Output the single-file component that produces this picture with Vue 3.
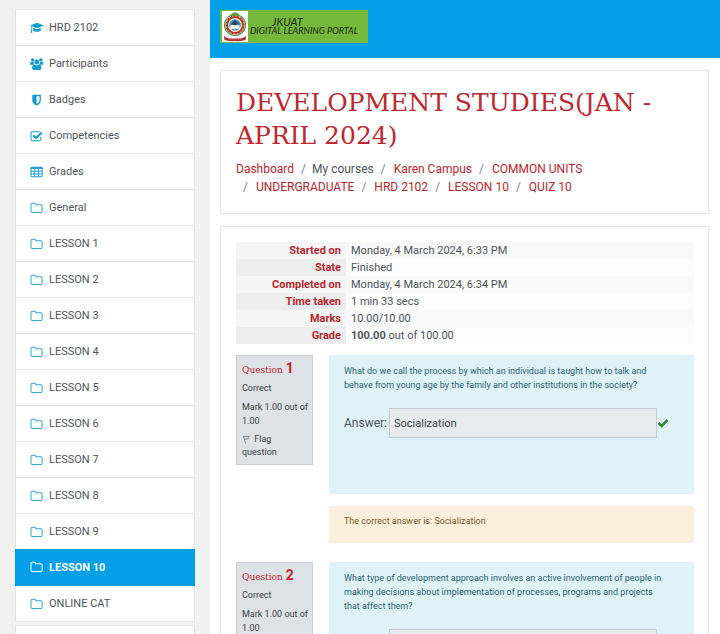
<script setup>
const navItems = [
  { label: 'HRD 2102', icon: 'cap' },
  { label: 'Participants', icon: 'users' },
  { label: 'Badges', icon: 'shield' },
  { label: 'Competencies', icon: 'check' },
  { label: 'Grades', icon: 'table' },
  { label: 'General', icon: 'folder' },
  ...Array.from({ length: 10 }, (_, i) => ({
    label: `LESSON ${i + 1}`,
    icon: 'folder',
    active: i === 9,
  })),
  { label: 'ONLINE CAT', icon: 'folder' },
]

const crumbs = [
  { label: 'Dashboard', link: true },
  { label: 'My courses', link: false },
  { label: 'Karen Campus', link: true },
  { label: 'COMMON UNITS', link: true },
  { label: 'UNDERGRADUATE', link: true },
  { label: 'HRD 2102', link: true },
  { label: 'LESSON 10', link: true },
  { label: 'QUIZ 10', link: true },
]

const summary = [
  { name: 'Started on', value: 'Monday, 4 March 2024, 6:33 PM' },
  { name: 'State', value: 'Finished' },
  { name: 'Completed on', value: 'Monday, 4 March 2024, 6:34 PM' },
  { name: 'Time taken', value: '1 min 33 secs' },
  { name: 'Marks', value: '10.00/10.00' },
  { name: 'Grade', strong: '100.00', value: ' out of 100.00' },
]

const questions = [
  {
    number: 1,
    text: 'What do we call the process by which an individual is taught how to talk and behave from young age by the family and other institutions in the society?',
    answer: 'Socialization',
    feedback: 'The correct answer is: Socialization',
  },
  {
    number: 2,
    text: 'What type of development approach involves an active involvement of people in making decisions about implementation of processes, programs and projects that affect them?',
    answer: '',
    feedback: '',
  },
]
</script>

<template>
  <div class="page">
    <aside class="sidebar">
      <nav class="nav-list">
        <a
          v-for="item in navItems"
          :key="item.label"
          href="#"
          class="nav-item"
          :class="{ active: item.active }"
        >
          <svg v-if="item.icon === 'cap'" class="nav-icon" viewBox="0 0 16 14">
            <path d="M8 1 16 4.2 8 7.4 2 5V9.2L2.600 12.500H.4L1.200 9.200V4.600L0 4.200Z" fill="currentColor" />
            <path d="M3.600 6.700 8 8.500 12.400 6.700V9.800C11 12 5 12 3.600 9.800Z" fill="currentColor" />
          </svg>
          <svg v-else-if="item.icon === 'users'" class="nav-icon" viewBox="0 0 16 14">
            <circle cx="3" cy="2.400" r="2" fill="currentColor" />
            <circle cx="12.500" cy="2.400" r="2" fill="currentColor" />
            <circle cx="7.750" cy="4.600" r="2.900" fill="currentColor" />
            <path d="M0 8V6.300Q0 4.600 1.500 4.600H4Q4.100 6.600 5 8ZM15.500 8V6.300Q15.500 4.600 14 4.600H11.500Q11.400 6.600 10.500 8ZM2.400 12V10.500Q2.400 8 5 7.600Q7.750 9.400 10.500 7.600Q13.100 8 13.100 10.500V12Q13.100 14 11.500 14H4Q2.400 14 2.400 12Z" fill="currentColor" />
          </svg>
          <svg v-else-if="item.icon === 'shield'" class="nav-icon" viewBox="0 0 16 14">
            <path fill-rule="evenodd" d="M2.500 1H12.500V7.500C12.500 10.500 10 12.300 7.500 13.500C5 12.300 2.500 10.500 2.500 7.500ZM7.500 2.600V11.700C9.500 10.600 11 9.200 11 7.500V2.600Z" fill="currentColor" />
          </svg>
          <svg v-else-if="item.icon === 'check'" class="nav-icon" viewBox="0 0 16 14">
            <path d="M12.500 8V11Q12.500 12.500 11 12.500H2.500Q1 12.500 1 11V3.500Q1 2 2.500 2H11" fill="none" stroke="currentColor" stroke-width="1.200" />
            <path d="M3.600 6.200 6.800 9.400 13.600 2.800" fill="none" stroke="currentColor" stroke-width="2.400" />
          </svg>
          <svg v-else-if="item.icon === 'table'" class="nav-icon" viewBox="0 0 16 14">
            <rect x="1" y="1.500" width="13" height="11" rx="1" fill="none" stroke="currentColor" stroke-width="1.200" />
            <path d="M1 2.400H14" stroke="currentColor" stroke-width="2" />
            <path d="M1 6.100H14M1 9.300H14M5.300 3V12.500M9.700 3V12.500" stroke="currentColor" stroke-width="1.100" />
          </svg>
          <svg v-else class="nav-icon folder" viewBox="0 0 16 14">
            <path d="M1 3Q1 1.500 2.500 1.500H5.300Q6.600 1.500 6.600 3.200H12.500Q14 3.200 14 4.700V10.800Q14 12.300 12.500 12.300H2.500Q1 12.300 1 10.800Z" fill="none" stroke="currentColor" stroke-width="1.200" />
          </svg>
          <span>{{ item.label }}</span>
        </a>
      </nav>
      <div class="nav-list next-list"></div>
    </aside>

    <div class="main">
      <header class="topbar">
        <a href="#" class="brand">
          <svg class="crest" viewBox="0 0 26 31">
            <rect width="26" height="31" fill="#fff" />
            <path d="M9 3Q13-.5 17 3V6H9Z" fill="#68a643" />
            <circle cx="13" cy="14" r="10.500" fill="none" stroke="#4c9b4f" stroke-width="1.200" />
            <circle cx="13" cy="14" r="8.300" fill="#fff5d5" stroke="#b92d32" stroke-width="2.600" />
            <circle cx="13" cy="14" r="8.900" fill="none" stroke="#eed05c" stroke-width="1" stroke-dasharray="1.500 2" />
            <circle cx="13" cy="14" r="5.800" fill="#3794bd" />
            <path d="M9 13 13 9 17 13V14H9Z" fill="#294862" />
            <path d="M8.500 14Q11 13.200 13 14.500Q15 13.200 17.500 14V18Q15 17.200 13 18.500Q11 17.200 8.500 18Z" fill="#fff" />
            <path d="M13 14.500V18.500" stroke="#8b969e" stroke-width=".6" />
            <path d="M2 25Q5 28 13 27.500Q21 28 24 25L23.500 29Q20 30.500 13 30Q6 30.500 2.500 29Z" fill="#ad3036" />
            <path d="M6 28.500H20" stroke="#d07a7a" stroke-width=".5" stroke-dasharray="1 1" />
          </svg>
          <span class="brand-text">
            <span class="brand-name">JKUAT</span>
            <span>DIGITAL LEARNING PORTAL</span>
          </span>
        </a>
      </header>

      <main class="content">
        <section class="card heading-card">
          <h1>DEVELOPMENT STUDIES(JAN - APRIL 2024)</h1>
          <nav aria-label="Breadcrumb">
            <ol class="crumbs">
              <li v-for="crumb in crumbs" :key="crumb.label" :class="{ plain: !crumb.link }">
                <a v-if="crumb.link" href="#">{{ crumb.label }}</a>
                <span v-else>{{ crumb.label }}</span>
              </li>
            </ol>
          </nav>
        </section>

        <section class="card">
          <table class="summary">
            <tbody>
              <tr v-for="row in summary" :key="row.name">
                <th scope="row">{{ row.name }}</th>
                <td><b v-if="row.strong">{{ row.strong }}</b>{{ row.value }}</td>
              </tr>
            </tbody>
          </table>

          <article v-for="q in questions" :key="q.number" class="question">
            <div class="info">
              <h2>Question <b>{{ q.number }}</b></h2>
              <p>Correct</p>
              <p>Mark 1.00 out of 1.00</p>
              <a href="#" class="flag">
                <svg viewBox="0 0 9 10">
                  <path d="M1 1 3.500 9.500M1.200 1.500H7.500L6 4.500H2.200" fill="none" stroke="#777f86" />
                </svg>
                Flag question
              </a>
            </div>
            <div class="body">
              <div class="formulation">
                <p>{{ q.text }}</p>
                <div class="answer">
                  <label :for="`answer-${q.number}`">Answer:</label>
                  <input :id="`answer-${q.number}`" type="text" :value="q.answer" readonly />
                  <svg viewBox="0 0 12 10">
                    <path d="M1.500 5 4.700 8 10.500 2" fill="none" stroke="#2f8a3a" stroke-width="2.600" />
                  </svg>
                </div>
              </div>
              <div v-if="q.feedback" class="feedback">{{ q.feedback }}</div>
            </div>
          </article>
        </section>
      </main>
    </div>
  </div>
</template>

<style>
body {
  margin: 0;
  background: #fff;
}
</style>

<style scoped>
* {
  box-sizing: border-box;
}

.page {
  display: grid;
  grid-template-columns: 210px minmax(0, 1fr);
  height: 100vh;
  overflow: hidden;
  font-family: Roboto, "Liberation Sans", sans-serif;
  font-size: 11px;
  color: #4f5459;
}

a {
  color: inherit;
  text-decoration: none;
}

.sidebar {
  padding: 9px 15px 0;
  background: #f1f1f1;
}

.nav-list {
  border: 1px solid #e1e3e4;
  border-bottom-width: 0;
  background: #fff;
}

.nav-item {
  display: flex;
  align-items: center;
  gap: 5px;
  height: 36px;
  padding: 0 14px;
  border-bottom: 1px solid #dfe1e2;
}

.nav-icon {
  flex: none;
  width: 14px;
  height: 12px;
  color: #169bd0;
}

.nav-icon.folder {
  color: #35a9cb;
}

.nav-item.active {
  margin: -1px -1px 0;
  padding: 0 15px;
  height: 37px;
  background: #009fe8;
  border-color: #009fe8;
  color: #fff;
  font-weight: 700;
}

.active .nav-icon.folder {
  color: #fff;
}

.next-list {
  height: 40px;
  margin-top: 3px;
}

.topbar {
  height: 58px;
  padding: 10px;
  background: #009fe8;
}

.brand {
  display: inline-flex;
  align-items: center;
  gap: 2px;
  width: 148px;
  height: 33px;
  padding: 1px 2px;
  background: #76b93b;
  color: #17280f;
}

.crest {
  flex: none;
  width: 26px;
  height: 31px;
}

.brand-text {
  padding-bottom: 2px;
  font: italic 9px/9px Lato, sans-serif;
  white-space: nowrap;
}

.brand-name {
  display: block;
  padding-left: 22px;
  font-size: 11px;
}

.content {
  display: flex;
  flex-direction: column;
  gap: 12px;
  padding: 12px 11px 0 10px;
}

.card {
  padding: 15px 14px 15px 15px;
  border: 1px solid #e6e6e6;
  background: #fff;
}

.heading-card {
  padding-bottom: 17px;
}

h1 {
  margin: 0 0 8px;
  font: 400 25px/33px "DejaVu Serif", serif;
  color: #bd2830;
}

.crumbs {
  display: flex;
  flex-wrap: wrap;
  margin: 0;
  padding: 0;
  list-style: none;
  font-size: 12px;
  line-height: 18px;
}

.crumbs li + li::before {
  content: "/";
  padding: 0 8px 0 7px;
  color: #7a8086;
}

.crumbs li.plain::before {
  padding-right: 6px;
}

.crumbs a {
  color: #b8262e;
}

.summary {
  width: 100%;
  border-collapse: collapse;
  line-height: 17px;
}

.summary th {
  width: 110px;
  padding: 0 5px;
  background: #f5f5f5;
  color: #b8262e;
  text-align: right;
}

.summary td {
  padding: 0 5px;
  background: #f9f9f9;
}

.summary tr:nth-child(even) th {
  background: #eee;
}

.summary tr:nth-child(even) td {
  background: #fcfcfc;
}

.question {
  display: grid;
  grid-template-columns: 77px minmax(0, 1fr);
  align-items: start;
  gap: 16px;
  margin: 11px 0 19px;
  font-size: 9px;
  line-height: 14px;
}

.info {
  padding: 5px 2px 5px 5px;
  border: 1px solid #c9cdd2;
  background: #dee1e6;
  color: #3c4146;
}

.info h2 {
  margin: 0 0 3px;
  font: 400 9px/15px "DejaVu Serif", serif;
  color: #c0262e;
}

.info h2 b {
  font: 700 14px/15px Roboto, sans-serif;
}

.info p {
  margin: 0 0 5px;
}

.flag {
  display: block;
  padding-right: 12px;
  line-height: 13px;
}

.flag svg {
  width: 9px;
  height: 9px;
  margin-right: 1px;
  vertical-align: middle;
}

.formulation {
  min-height: 139px;
  padding: 9px 24px 8px 15px;
  background: #def2f8;
  color: #2f6473;
}

.formulation p {
  margin: 0 0 16px;
}

.answer {
  display: flex;
  align-items: center;
  gap: 2px;
  font-size: 12px;
  color: #4f5459;
}

.answer input {
  flex: 0 1 268px;
  min-width: 0;
  height: 30px;
  padding: 0 4px;
  border: 1px solid #c4cbd2;
  border-radius: 0;
  background: #e8ebee;
  font: 11px Roboto, sans-serif;
  color: #3c4146;
}

.answer svg {
  flex: none;
  width: 12px;
  height: 10px;
  margin-left: -2px;
}

.feedback {
  margin-top: 12px;
  padding: 8px 15px 15px;
  background: #fcefdc;
  color: #7d5a29;
}
</style>
